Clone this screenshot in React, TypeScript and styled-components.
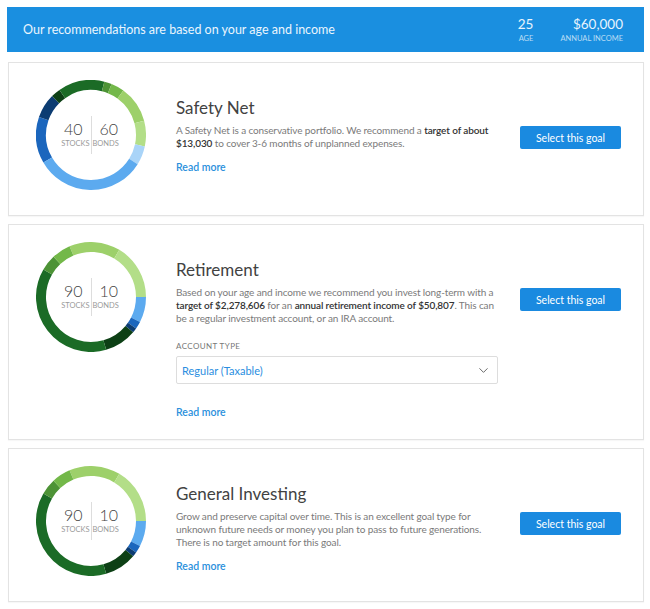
import styled, { createGlobalStyle } from 'styled-components';
import { ChevronDown } from 'lucide-react';

const GlobalStyle = createGlobalStyle`
  body {
    margin: 0;
    background: #ffffff;
    font-family: 'Lato', 'Open Sans', sans-serif;
  }
`;

type Segment = [number, number, string];

const C = {
  dg: '#1b6b26',
  vdg: '#0d4015',
  mg: '#4d9336',
  g: '#73b849',
  lg: '#9dd06a',
  plg: '#b3de88',
  lb: '#a9d4f8',
  b: '#5caaef',
  db: '#1b66bd',
  nb: '#0c3c72',
};

const safetySegments: Segment[] = [
  [240, 289, C.db],
  [289, 315, C.nb],
  [315, 325, C.vdg],
  [325, 374, C.dg],
  [14, 22, C.mg],
  [22, 36, C.g],
  [36, 75, C.lg],
  [75, 102, C.plg],
  [102, 122, C.lb],
  [122, 240, C.b],
];

const growthSegments: Segment[] = [
  [-23, 31, C.lg],
  [31, 90, C.plg],
  [90, 117, C.b],
  [117, 125, C.db],
  [125, 130, C.nb],
  [130, 164, C.vdg],
  [164, 300, C.dg],
  [300, 317, C.mg],
  [317, 337, C.g],
];

const point = (r: number, deg: number) => {
  const a = (deg * Math.PI) / 180;
  return `${55 + r * Math.sin(a)} ${55 - r * Math.cos(a)}`;
};

const arc = (from: number, to: number) => {
  const r = 50;
  const large = to - from > 180 ? 1 : 0;
  return `M ${point(r, from)} A ${r} ${r} 0 ${large} 1 ${point(r, to)}`;
};

interface DonutProps {
  segments: Segment[];
  stocks: number;
  bonds: number;
}

const Donut = ({ segments, stocks, bonds }: DonutProps) => (
  <DonutBox>
    <svg width="110" height="110" viewBox="0 0 110 110">
      {segments.map(([from, to, color], i) => (
        <path key={i} d={arc(from, to)} stroke={color} strokeWidth="10" fill="none" />
      ))}
    </svg>
    <Split>
      <SplitSide $align="right">
        <SplitNumber>{stocks}</SplitNumber>
        <SplitLabel>Stocks</SplitLabel>
      </SplitSide>
      <SplitSide $align="left">
        <SplitNumber>{bonds}</SplitNumber>
        <SplitLabel>Bonds</SplitLabel>
      </SplitSide>
    </Split>
  </DonutBox>
);

const App = () => (
  <>
    <GlobalStyle />
    <Page>
      <Banner>
        <BannerText>Our recommendations are based on your age and income</BannerText>
        <Stats>
          <Stat>
            <StatValue>25</StatValue>
            <StatLabel>Age</StatLabel>
          </Stat>
          <Stat>
            <StatValue>$60,000</StatValue>
            <StatLabel>Annual income</StatLabel>
          </Stat>
        </Stats>
      </Banner>

      <GoalCard>
        <Donut segments={safetySegments} stocks={40} bonds={60} />
        <GoalBody>
          <GoalTitle>Safety Net</GoalTitle>
          <GoalText>
            A Safety Net is a conservative portfolio. We recommend a <b>target of about $13,030</b> to
            cover 3-6 months of unplanned expenses.
          </GoalText>
          <ReadMore href="#">Read more</ReadMore>
        </GoalBody>
        <SelectButton>Select this goal</SelectButton>
      </GoalCard>

      <GoalCard>
        <Donut segments={growthSegments} stocks={90} bonds={10} />
        <GoalBody>
          <GoalTitle>Retirement</GoalTitle>
          <GoalText>
            Based on your age and income we recommend you invest long-term with a{' '}
            <b>target of $2,278,606</b> for an <b>annual retirement income of $50,807</b>. This can be a
            regular investment account, or an IRA account.
          </GoalText>
          <FieldLabel>Account type</FieldLabel>
          <Dropdown>
            <span>Regular (Taxable)</span>
            <ChevronDown size={15} strokeWidth={1.4} color="#555" />
          </Dropdown>
          <ReadMore href="#" $gap={21}>
            Read more
          </ReadMore>
        </GoalBody>
        <SelectButton>Select this goal</SelectButton>
      </GoalCard>

      <GoalCard>
        <Donut segments={growthSegments} stocks={90} bonds={10} />
        <GoalBody>
          <GoalTitle>General Investing</GoalTitle>
          <GoalText>
            Grow and preserve capital over time. This is an excellent goal type for unknown future needs or
            money you plan to pass to future generations. There is no target amount for this goal.
          </GoalText>
          <ReadMore href="#">Read more</ReadMore>
        </GoalBody>
        <SelectButton>Select this goal</SelectButton>
      </GoalCard>
    </Page>
  </>
);

const Page = styled.div`
  display: flex;
  flex-direction: column;
  gap: 8px;
  padding: 7px 6px 6px 8px;
`;

const Banner = styled.div`
  display: flex;
  align-items: center;
  justify-content: space-between;
  height: 45px;
  margin: 0 0 2px -1px;
  padding: 0 21px 0 16px;
  background: #1a8fe0;
  color: #ffffff;
`;

const BannerText = styled.div`
  font-size: 12.5px;
  color: #eaf5fd;
`;

const Stats = styled.div`
  display: flex;
  gap: 27px;
`;

const Stat = styled.div`
  display: flex;
  flex-direction: column;
  align-items: flex-end;
`;

const StatValue = styled.div`
  font-size: 13.5px;
  line-height: 17px;
  color: #e8f4fd;
`;

const StatLabel = styled.div`
  font-size: 7.5px;
  line-height: 11px;
  text-transform: uppercase;
  color: rgba(255, 255, 255, 0.7);
`;

const GoalCard = styled.div`
  display: flex;
  align-items: flex-start;
  padding: 17px 22px 20px 27px;
  border: 1px solid #e3e3e3;
  box-shadow: 0 1px 1px rgba(0, 0, 0, 0.03);
`;

const DonutBox = styled.div`
  display: grid;
  place-items: center;
  width: 110px;
  height: 110px;
  margin-bottom: 5px;
  flex-shrink: 0;

  & > * {
    grid-area: 1 / 1;
  }
`;

const Split = styled.div`
  display: flex;
`;

const SplitSide = styled.div<{ $align: 'left' | 'right' }>`
  display: flex;
  flex-direction: column;
  align-items: ${({ $align }) => ($align === 'right' ? 'flex-end' : 'flex-start')};
  padding-top: 3px;
  padding-bottom: 4px;
  border-left: ${({ $align }) => ($align === 'left' ? '1px solid #dddddd' : 'none')};
`;

const SplitNumber = styled.div`
  padding: 0 8px;
  font-size: 16px;
  line-height: 19px;
  font-weight: 300;
  color: #444444;
`;

const SplitLabel = styled.div`
  padding: 0 1px;
  font-size: 7.5px;
  line-height: 12px;
  text-transform: uppercase;
  color: #9a9a9a;
`;

const GoalBody = styled.div`
  display: flex;
  flex-direction: column;
  align-items: flex-start;
  width: 326px;
  margin-left: 30px;
  margin-right: 8px;
  padding-top: 18px;
`;

const GoalTitle = styled.h2`
  margin: 0;
  font-size: 17px;
  line-height: 20px;
  font-weight: 400;
  color: #424242;
`;

const GoalText = styled.p`
  margin: 6px 0 0;
  font-size: 10px;
  line-height: 13px;
  letter-spacing: -0.12px;
  color: #7a7a7a;

  b {
    font-weight: 600;
    color: #333333;
  }
`;

const FieldLabel = styled.div`
  margin-top: 16px;
  font-size: 8px;
  line-height: 10px;
  letter-spacing: 0.4px;
  text-transform: uppercase;
  color: #777777;
`;

const Dropdown = styled.div`
  display: flex;
  align-items: center;
  justify-content: space-between;
  box-sizing: border-box;
  width: 322px;
  height: 28px;
  margin-top: 5px;
  padding: 0 6px 0 5px;
  border: 1px solid #dddddd;
  border-radius: 2px;
  font-size: 11px;
  color: #2a8ee0;
`;

const ReadMore = styled.a<{ $gap?: number }>`
  margin-top: ${({ $gap }) => $gap ?? 10}px;
  font-size: 10.5px;
  line-height: 14px;
  font-weight: 600;
  color: #2a90dc;
  text-decoration: none;
`;

const SelectButton = styled.button`
  width: 101px;
  height: 23px;
  margin-top: 46px;
  margin-left: auto;
  padding: 0;
  border: none;
  border-radius: 2px;
  background: #1a8ae0;
  font-family: inherit;
  font-size: 10.5px;
  color: #ffffff;
  cursor: pointer;
`;

export default App;
